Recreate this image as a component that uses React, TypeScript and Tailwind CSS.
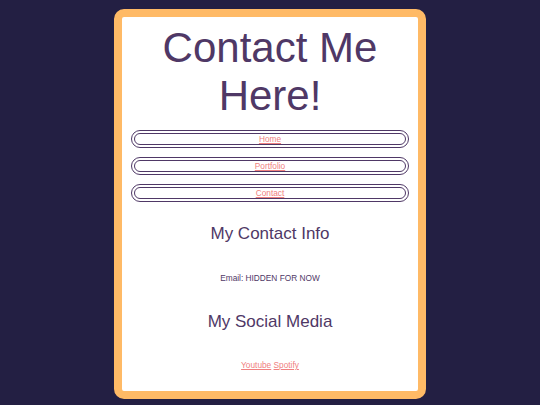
const navItems = ["Home", "Portfolio", "Contact"];

export default function App() {
  return (
    <div
      className="min-h-screen bg-[#231f43] flex justify-center pt-[9px]"
      style={{ fontFamily: '"Liberation Sans", Arial, sans-serif' }}
    >
      <div className="w-[312px] h-[390px] border-8 border-[#ffba66] rounded-[10px] bg-white flex flex-col items-center text-[#4f3866]">
        <h1 className="text-[42px] leading-[48px] mt-[7px] text-center">
          Contact Me
          <br />
          Here!
        </h1>

        <nav className="w-full px-[9px] mt-[10px] flex flex-col gap-[9px]">
          {navItems.map((item) => (
            <div
              key={item}
              className="h-[18px] rounded-full border-4 border-double border-[#4f3866] flex items-center justify-center"
            >
              <a href="#" className="text-[8.3px] leading-none text-[#f08080] underline">
                {item}
              </a>
            </div>
          ))}
        </nav>

        <h2 className="text-[17px] leading-[20px] mt-[22px]">My Contact Info</h2>
        <p className="text-[8.3px] leading-[10px] mt-[29px]">Email: HIDDEN FOR NOW</p>

        <h2 className="text-[17px] leading-[20px] mt-[29px]">My Social Media</h2>
        <p className="text-[8.3px] leading-[10px] mt-[28px]">
          <a href="#" className="text-[#f08080] underline">Youtube</a>{" "}
          <a href="#" className="text-[#f08080] underline">Spotify</a>
        </p>
      </div>
    </div>
  );
}
